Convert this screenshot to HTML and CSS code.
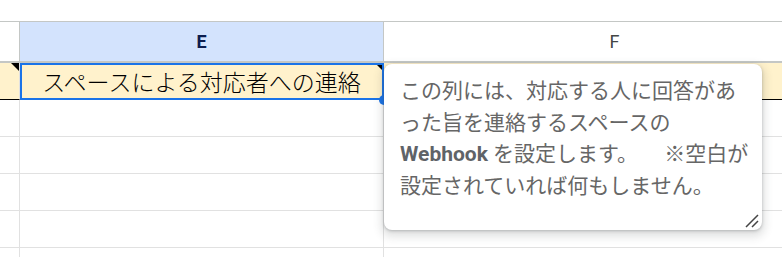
FILE: index.html
```html
<!DOCTYPE html>
<html lang="ja">
<head>
    <meta charset="UTF-8">
    <title>Sheet note</title>
    <link rel="stylesheet" href="styles.css">
</head>
<body>
    <div class="toolbar-gap"></div>
    <div class="sheet">
        <div class="row header-row">
            <div class="cell row-head"></div>
            <div class="cell col-head col-selected">E</div>
            <div class="cell col-head">F</div>
        </div>
        <div class="row note-row">
            <div class="cell row-head has-note"></div>
            <div class="cell active has-note">スペースによる対応者への連絡<span class="fill-handle"></span></div>
            <div class="cell"></div>
        </div>
        <div class="row"><div class="cell row-head"></div><div class="cell"></div><div class="cell"></div></div>
        <div class="row"><div class="cell row-head"></div><div class="cell"></div><div class="cell"></div></div>
        <div class="row"><div class="cell row-head"></div><div class="cell"></div><div class="cell"></div></div>
        <div class="row"><div class="cell row-head"></div><div class="cell"></div><div class="cell"></div></div>
        <div class="row"><div class="cell row-head"></div><div class="cell"></div><div class="cell"></div></div>

        <div class="note-popup">
            <p class="note-text">この列には、対応する人に回答があ<br>った旨を連絡するスペースの<br><b>Webhook</b> を設定します。　   ※空白が<br>設定されていれば何もしません。</p>
            <svg class="resize-grip" width="14" height="14" viewBox="0 0 14 14">
                <path d="M13 1 L1 13 M13 7 L7 13" stroke="#444" stroke-width="1.5" fill="none"/>
            </svg>
        </div>
    </div>
</body>
</html>
```

FILE: styles.css
```css
* {
    margin: 0;
    padding: 0;
    box-sizing: border-box;
}

html, body {
    overflow: hidden;
}

body {
    background-color: #ffffff;
    font-family: Roboto, "Noto Sans CJK JP", sans-serif;
}

.toolbar-gap {
    height: 21px;
}

.sheet {
    position: relative;
    height: 236px;
    overflow: hidden;
}

.row {
    display: grid;
    grid-template-columns: 20px 364px 462px;
    height: 37px;
}

.cell {
    position: relative;
    border-right: 1px solid #e1e1e1;
    border-bottom: 1px solid #e1e1e1;
}

/* Column header */
.header-row {
    height: 42px;
    border-top: 1px solid #c4c7c5;
}

.header-row .cell {
    border-right-color: #c4c7c5;
    border-bottom: 2px solid #c4c7c5;
}

.col-head {
    display: flex;
    align-items: center;
    justify-content: center;
    font-size: 18px;
    color: #444746;
}

.col-selected {
    background-color: #d3e3fd;
    color: #0b1d4f;
    font-weight: 700;
}

/* First data row */
.note-row .cell {
    background-color: #fff2cc;
    border-bottom-color: #000000;
}

.has-note::before {
    content: "";
    position: absolute;
    top: 0;
    right: 0;
    border-top: 8px solid #000000;
    border-left: 8px solid transparent;
}

.active {
    display: flex;
    align-items: center;
    justify-content: center;
    font-family: "Noto Sans CJK JP", sans-serif;
    font-size: 23px;
    font-weight: 300;
    color: #000000;
    padding-bottom: 1px;
}

.active::after {
    content: "";
    position: absolute;
    top: 0;
    left: 0;
    right: -1px;
    bottom: -1px;
    border: 2px solid #1a73e8;
}

.fill-handle {
    position: absolute;
    right: -6px;
    bottom: -6px;
    width: 10px;
    height: 10px;
    border-radius: 50%;
    background-color: #1a73e8;
    z-index: 1;
}

/* Note popup */
.note-popup {
    position: absolute;
    left: 384px;
    top: 43px;
    width: 378px;
    height: 166px;
    background-color: #ffffff;
    border-radius: 8px;
    box-shadow: 0 1px 3px rgba(60, 64, 67, 0.3), 0 4px 8px 3px rgba(60, 64, 67, 0.15);
    padding: 12px 16px;
    z-index: 2;
}

.note-text {
    font-size: 21px;
    line-height: 31.5px;
    color: #666666;
    white-space: pre;
}

.note-text b {
    color: #5f6368;
}

.resize-grip {
    position: absolute;
    right: 3px;
    bottom: 2px;
}
```
